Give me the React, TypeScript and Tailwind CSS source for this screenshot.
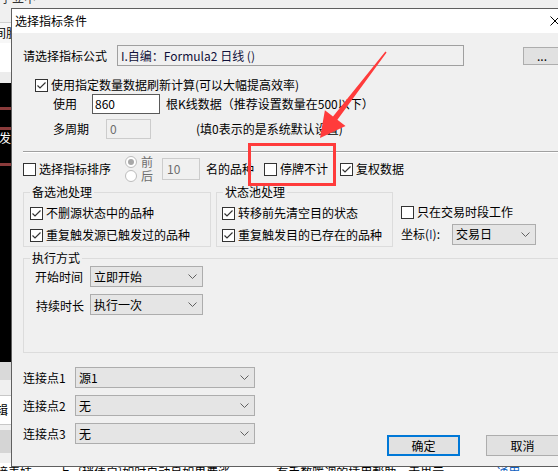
import React from "react";

const Check = ({ checked = false }: { checked?: boolean }) => (
  <span className="w-[13px] h-[13px] border border-[#333333] bg-white flex items-center justify-center shrink-0">
    {checked && (
      <svg width="11" height="11" viewBox="0 0 11 11">
        <path d="M1.5 5.5 L4 8 L9.5 2.5" stroke="#333333" strokeWidth="1.2" fill="none" />
      </svg>
    )}
  </span>
);

const Chevron = () => (
  <svg width="9" height="5" viewBox="0 0 9 5" className="shrink-0">
    <path d="M0.5 0.5 L4.5 4.5 L8.5 0.5" stroke="#606060" strokeWidth="1" fill="none" />
  </svg>
);

const Select = ({ className, text }: { className: string; text: string }) => (
  <div
    className={
      "h-[21px] bg-[#e5e5e5] border border-[#adadad] flex items-center justify-between pl-[3px] pr-[5px] " +
      className
    }
  >
    <span className="leading-[14px]">{text}</span>
    <Chevron />
  </div>
);

const Radio = ({ checked = false }: { checked?: boolean }) => (
  <span className="w-[12px] h-[12px] rounded-full border border-[#bcbcbc] bg-white flex items-center justify-center shrink-0">
    {checked && <span className="w-[6px] h-[6px] rounded-full bg-[#a8a8a8]" />}
  </span>
);

const CheckRow = ({ checked, label }: { checked?: boolean; label: string }) => (
  <div className="h-[18px] flex items-center">
    <Check checked={checked} />
    <span className="ml-[3px] leading-[14px] whitespace-nowrap">{label}</span>
  </div>
);

export default function App() {
  return (
    <div className="relative w-[558px] h-[471px] overflow-hidden bg-[#f0f0f0] text-[12px] text-black font-['Noto_Sans_CJK_SC',sans-serif]">
      {/* background application */}
      <div className="flex flex-col w-full">
        <div className="h-[22px] shrink-0 bg-[#f0f0f0] overflow-hidden">
          <div className="-mt-[9px] leading-[14px] text-[#333] whitespace-nowrap">字立中</div>
        </div>
        <div className="h-[21px] shrink-0 border-t border-[#d0d0d0] bg-[#f7f7f7] flex items-center overflow-hidden">
          <span className="-ml-[18px] leading-[14px] whitespace-nowrap">时间股</span>
        </div>
        <div className="h-[29px] shrink-0 bg-white" />
        <div className="h-[11px] shrink-0 bg-[#ececec]" />
        <div className="h-[279px] shrink-0 bg-black flex flex-col overflow-hidden">
          <div className="mt-[24px] h-[3px] shrink-0 bg-[#8a3b3b]" />
          <div className="mt-[17px] h-[3px] shrink-0 bg-[#8a3b3b]" />
          <div className="mt-[1px] -ml-[13px] leading-[14px] text-white whitespace-nowrap">触发</div>
          <div className="mt-[18px] h-[3px] shrink-0 bg-[#8a3b3b]" />
        </div>
        <div className="h-[18px] shrink-0 bg-[#d9d9d9]" />
        <div className="h-[15px] shrink-0 bg-[#f0f0f0]" />
        <div className="h-[30px] shrink-0 bg-white border-y border-[#c8c8c8] flex items-center overflow-hidden">
          <span className="-ml-[16px] leading-[14px] whitespace-nowrap">编辑</span>
        </div>
        <div className="h-[5px] shrink-0 bg-[#f0f0f0]" />
        <div className="h-[23px] shrink-0 bg-[#d5d5d5]" />
        <div className="h-[10px] shrink-0 bg-[#f0f0f0]" />
        <div className="h-[24px] shrink-0 bg-white flex items-start whitespace-nowrap leading-[14px] overflow-hidden pt-[2px]">
          <span className="-ml-[4px]">接表妹</span>
          <span className="ml-[26px]">上</span>
          <span className="ml-[8px]">[稍佳启]如时自动良如果费涨</span>
          <span className="ml-[46px]">有手数暖调的插用帮助，走界示</span>
          <span className="ml-[52px] text-[#1060c0]">通用</span>
        </div>
      </div>

      {/* dialog window */}
      <div className="absolute left-[11px] top-[8px] w-[568px] h-[459px] border border-[#5f5f5f] flex flex-col bg-[#f0f0f0]">
        <div className="h-[24px] bg-white flex items-center justify-between shrink-0">
          <span className="pl-[3px] leading-[14px]">选择指标条件</span>
          <div className="w-[46px] h-[24px] flex items-center justify-center">
            <svg width="10" height="10" viewBox="0 0 10 10">
              <path d="M0.5 0.5 L9.5 9.5 M9.5 0.5 L0.5 9.5" stroke="#000" strokeWidth="1" />
            </svg>
          </div>
        </div>

        <div className="flex flex-col pl-[11px] pr-[11px]">
          {/* formula row */}
          <div className="mt-[12px] h-[21px] flex items-center">
            <span className="w-[94px] leading-[14px] whitespace-nowrap">请选择指标公式</span>
            <div className="w-[347px] h-[21px] border border-[#a0a0a0] bg-[#f0f0f0] flex items-center pl-[3px] text-[#10103a] whitespace-nowrap">
              <span className="leading-[14px]">I.自编：Formula2 日线 ()</span>
            </div>
            <div className="ml-[59px] w-[38px] h-[18px] bg-[#e1e1e1] border border-[#adadad] flex items-center justify-center leading-[14px]">
              ...
            </div>
          </div>

          {/* use count */}
          <div className="mt-[10px] h-[18px] flex items-center pl-[12px]">
            <Check checked />
            <span className="ml-[3px] leading-[14px] whitespace-nowrap">使用指定数量数据刷新计算(可以大幅提高效率)</span>
          </div>

          <div className="h-[20px] flex items-center">
            <span className="ml-[30px] w-[39px] leading-[14px]">使用</span>
            <div className="w-[68px] h-[20px] border border-[#5a5a5a] bg-white flex items-center pl-[2px]">
              <span className="leading-[14px]">860</span>
            </div>
            <span className="ml-[6px] leading-[14px] whitespace-nowrap">根K线数据（推荐设置数量在500以下）</span>
          </div>

          <div className="mt-[5px] h-[20px] flex items-center">
            <span className="ml-[30px] w-[53px] leading-[14px]">多周期</span>
            <div className="w-[45px] h-[20px] border border-[#cccccc] bg-[#f0f0f0] flex items-center pl-[3px] text-[#6d6d6d]">
              <span className="leading-[14px]">0</span>
            </div>
            <span className="ml-[45px] leading-[14px] whitespace-nowrap">(填0表示的是系统默认设置)</span>
          </div>

          {/* separator */}
          <div className="mt-[12px] h-[2px] border-t border-t-[#a0a0a0] border-b border-b-white" />

          {/* sort row */}
          <div className="mt-[2px] h-[28px] flex items-center">
            <Check />
            <span className="ml-[3px] leading-[14px] whitespace-nowrap">选择指标排序</span>
            <div className="ml-[14px] flex flex-col">
              <div className="h-[14px] flex items-center">
                <Radio checked />
                <span className="ml-[4px] leading-[14px] text-[#6d6d6d]">前</span>
              </div>
              <div className="h-[14px] flex items-center">
                <Radio />
                <span className="ml-[4px] leading-[14px] text-[#6d6d6d]">后</span>
              </div>
            </div>
            <div className="ml-[9px] w-[38px] h-[22px] border border-[#cccccc] bg-[#f0f0f0] flex items-center pl-[4px] text-[#6d6d6d]">
              <span className="leading-[14px]">10</span>
            </div>
            <span className="ml-[6px] leading-[14px] whitespace-nowrap">名的品种</span>
            <span className="ml-[10px]">
              <Check />
            </span>
            <span className="ml-[3px] leading-[14px] whitespace-nowrap">停牌不计</span>
            <span className="ml-[12px]">
              <Check checked />
            </span>
            <span className="ml-[3px] leading-[14px] whitespace-nowrap">复权数据</span>
          </div>

          {/* groups */}
          <div className="mt-[9px] flex items-start">
            <div className="relative w-[188px] h-[55px] border border-[#dcdcdc] pl-[6px] pt-[11px] flex flex-col gap-[4px]">
              <span className="absolute left-[6px] top-[-8px] px-[2px] bg-[#f0f0f0] leading-[14px] whitespace-nowrap">备选池处理</span>
              <CheckRow checked label="不删源状态中的品种" />
              <CheckRow checked label="重复触发源已触发过的品种" />
            </div>
            <div className="relative ml-[5px] w-[177px] h-[55px] border border-[#dcdcdc] pl-[5px] pt-[11px] flex flex-col gap-[4px]">
              <span className="absolute left-[6px] top-[-8px] px-[2px] bg-[#f0f0f0] leading-[14px] whitespace-nowrap">状态池处理</span>
              <CheckRow checked label="转移前先清空目的状态" />
              <CheckRow checked label="重复触发目的已存在的品种" />
            </div>
            <div className="ml-[8px] pt-[11px] flex flex-col">
              <CheckRow label="只在交易时段工作" />
              <div className="mt-[3px] h-[20px] flex items-center">
                <span className="w-[51px] leading-[14px] whitespace-nowrap">
                  坐标(<span className="text-[#1a3c8c]">I</span>):
                </span>
                <Select className="w-[84px] h-[20px]" text="交易日" />
              </div>
            </div>
          </div>

          {/* execution */}
          <div className="relative mt-[11px] h-[95px] border border-[#dcdcdc] pl-[11px] pt-[7px] flex flex-col gap-[7px]">
            <span className="absolute left-[6px] top-[-8px] px-[2px] bg-[#f0f0f0] leading-[14px] whitespace-nowrap">执行方式</span>
            <div className="h-[21px] flex items-center">
              <span className="w-[55px] leading-[14px] whitespace-nowrap">开始时间</span>
              <Select className="w-[113px]" text="立即开始" />
            </div>
            <div className="h-[21px] flex items-center">
              <span className="w-[55px] leading-[14px] whitespace-nowrap mt-[3px] pl-[1px]">持续时长</span>
              <Select className="w-[113px]" text="执行一次" />
            </div>
          </div>

          {/* connection points + buttons */}
          <div className="mt-[14px] flex items-start">
            <div className="flex flex-col gap-[7px]">
              <div className="h-[21px] flex items-center">
                <span className="w-[52px] leading-[14px] whitespace-nowrap">连接点1</span>
                <Select className="w-[180px]" text="源1" />
              </div>
              <div className="h-[21px] flex items-center">
                <span className="w-[52px] leading-[14px] whitespace-nowrap">连接点2</span>
                <Select className="w-[180px]" text="无" />
              </div>
              <div className="h-[21px] flex items-center">
                <span className="w-[52px] leading-[14px] whitespace-nowrap">连接点3</span>
                <Select className="w-[180px]" text="无" />
              </div>
            </div>
            <div className="ml-[132px] mt-[68px] flex gap-[26px]">
              <div className="w-[73px] h-[21px] border-2 border-[#0078d7] bg-[#e1e1e1] flex items-center justify-center leading-[14px]">
                确定
              </div>
              <div className="w-[73px] h-[21px] border border-[#adadad] bg-[#e1e1e1] flex items-center justify-center leading-[14px]">
                取消
              </div>
            </div>
          </div>
        </div>
      </div>

      {/* annotation overlays */}
      <div className="absolute left-[248px] top-[143px] w-[88px] h-[43px] border-[3px] border-[#ff3b3b]" />
      <svg className="absolute left-0 top-0 pointer-events-none" width="558" height="471" viewBox="0 0 558 471">
        <polygon
          points="386.6,52.5 337.4,119.8 345.5,126.1 320,138 324.9,110.3 333,116.6 385.4,51.5"
          fill="#ff3b3b"
        />
      </svg>
    </div>
  );
}
